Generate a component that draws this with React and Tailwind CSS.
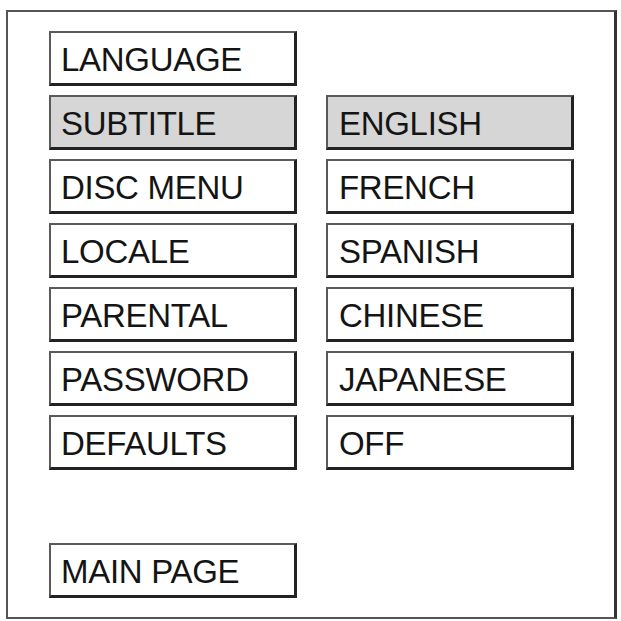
import React from 'react';

const left = ['LANGUAGE', 'SUBTITLE', 'DISC MENU', 'LOCALE', 'PARENTAL', 'PASSWORD', 'DEFAULTS'];
const right = ['', 'ENGLISH', 'FRENCH', 'SPANISH', 'CHINESE', 'JAPANESE', 'OFF'];

const MenuBox = ({ label, active, pad = 'pl-[10px]' }) => (
  <div
    className={`h-[55px] flex items-center ${pad} pt-[3px] border-t-2 border-l-2 border-b-[3px] border-r-[3px] border-t-[#5a5a5a] border-l-[#5a5a5a] border-b-[#222] border-r-[#222] ${
      active ? 'bg-[#d6d6d6]' : 'bg-white'
    }`}
  >
    <span className="text-[33px] leading-none text-[#141414] tracking-[-0.3px]" style={{ fontFamily: '"Liberation Sans", Arial, sans-serif' }}>
      {label}
    </span>
  </div>
);

export default function App() {
  return (
    <div className="w-[621px] h-[621px] bg-white pt-[10px] pl-[6px]">
      <div className="w-[611px] h-[609px] border-t-2 border-l-2 border-b-2 border-r-[3px] border-[#555] border-r-[#333] pt-[19px] pl-[41px]">
        <div className="grid grid-cols-[248px_248px] gap-x-[29px] gap-y-[9px]">
          {left.map((l, i) => (
            <React.Fragment key={l}>
              <MenuBox label={l} active={i === 1} />
              {right[i] ? <MenuBox label={right[i]} active={i === 1} pad="pl-[11px]" /> : <div />}
            </React.Fragment>
          ))}
        </div>
        <div className="w-[248px] mt-[73px]">
          <MenuBox label="MAIN PAGE" />
        </div>
      </div>
    </div>
  );
}
